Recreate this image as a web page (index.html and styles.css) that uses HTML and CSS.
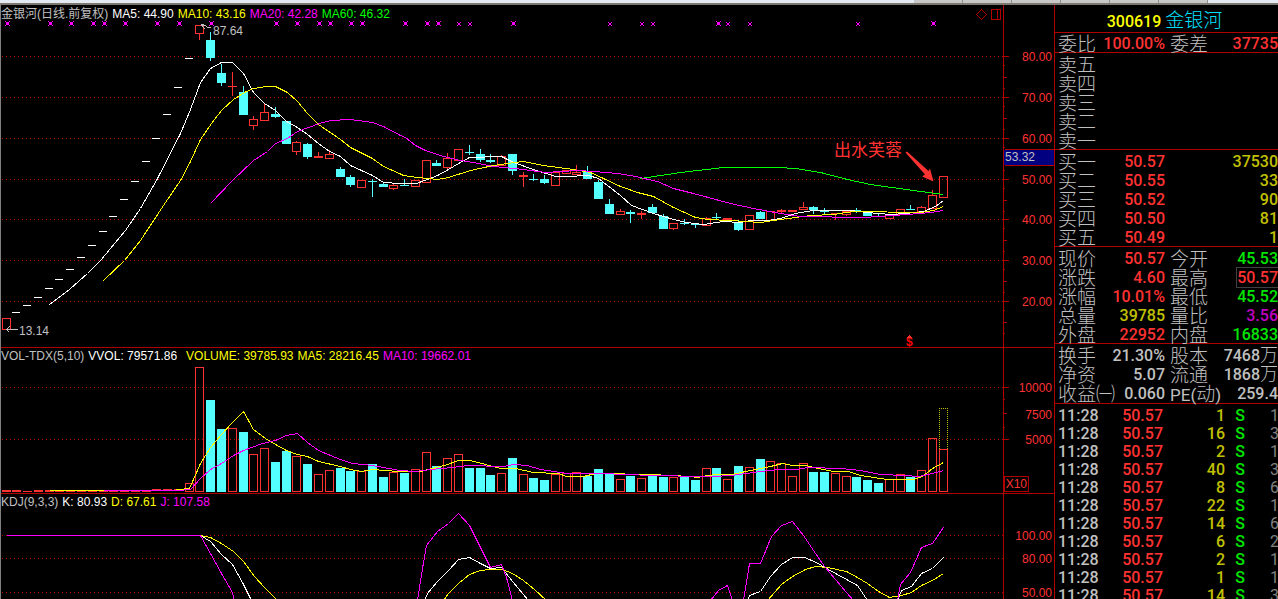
FILE: index.html
```html
<!DOCTYPE html>
<html lang="zh-CN">
<head>
<meta charset="utf-8">
<title>金银河 300619</title>
<link rel="stylesheet" href="styles.css">
</head>
<body>
<div class="strip"><span class="strip-main"></span><span class="strip-tab"></span><span class="strip-tab"></span><span class="strip-tab"></span><span class="strip-tab"></span><span class="strip-tab"></span><span class="strip-tab"></span><span class="strip-end"></span></div>
<div class="terminal">
  <main class="charts">
    <section class="panel panel-price">
      <div class="plot">
        <header class="legend">
          <span class="c-gray">金银河(日线.前复权)</span><span class="c-white">MA5: 44.90</span><span class="c-yellow">MA10: 43.16</span><span class="c-magenta">MA20: 42.28</span><span class="c-green">MA60: 46.32</span>
          <svg class="tools" width="26" height="13" aria-hidden="true"><path d="M5.500 1.500l5 5-5 5-5-5zM15.500 1.500h9v10h-9zM21.500 1.500v10"/></svg>
        </header>
        <svg class="canvas" id="price" height="326"></svg>
      </div>
      <svg class="axis" id="price-axis" height="342"></svg>
    </section>
    <section class="panel panel-volume">
      <div class="plot">
        <header class="legend">
          <span class="c-gray">VOL-TDX(5,10)</span><span class="c-white">VVOL: 79571.86</span><span class="c-yellow gap">VOLUME: 39785.93</span><span class="c-yellow">MA5: 28216.45</span><span class="c-magenta">MA10: 19662.01</span>
        </header>
        <svg class="canvas" id="volume" height="129"></svg>
      </div>
      <svg class="axis" id="volume-axis" height="145"></svg>
    </section>
    <section class="panel panel-kdj">
      <div class="plot">
        <header class="legend">
          <span class="c-gray">KDJ(9,3,3)</span><span class="c-white">K: 80.93</span><span class="c-yellow">D: 67.61</span><span class="c-magenta">J: 107.58</span>
        </header>
        <svg class="canvas" id="kdj"></svg>
      </div>
      <svg class="axis" id="kdj-axis"></svg>
    </section>
  </main>
  <aside class="quote">
    <h1 class="stock"><span class="c-yellow">300619</span> <span class="stock-name">金银河</span></h1>
    <table class="grid head">
      <tr><th>委比</th><td class="c-red">100.00%</td><th>委差</th><td class="c-red">37735</td></tr>
    </table>
    <table class="grid sell">
      <tr><th>卖五</th><td></td><th></th><td></td></tr>
      <tr><th>卖四</th><td></td><th></th><td></td></tr>
      <tr><th>卖三</th><td></td><th></th><td></td></tr>
      <tr><th>卖二</th><td></td><th></th><td></td></tr>
      <tr><th>卖一</th><td></td><th></th><td></td></tr>
    </table>
    <table class="grid">
      <tr><th>买一</th><td class="c-red">50.57</td><th></th><td class="c-olive">37530</td></tr>
      <tr><th>买二</th><td class="c-red">50.55</td><th></th><td class="c-olive">33</td></tr>
      <tr><th>买三</th><td class="c-red">50.52</td><th></th><td class="c-olive">90</td></tr>
      <tr><th>买四</th><td class="c-red">50.50</td><th></th><td class="c-olive">81</td></tr>
      <tr><th>买五</th><td class="c-red">50.49</td><th></th><td class="c-olive">1</td></tr>
    </table>
    <table class="grid">
      <tr><th>现价</th><td class="c-red">50.57</td><th>今开</th><td class="c-lime">45.53</td></tr>
      <tr><th>涨跌</th><td class="c-red">4.60</td><th>最高</th><td class="c-red"><span class="boxed">50.57</span></td></tr>
      <tr><th>涨幅</th><td class="c-red">10.01%</td><th>最低</th><td class="c-lime">45.52</td></tr>
      <tr><th>总量</th><td class="c-olive">39785</td><th>量比</th><td class="c-purple">3.56</td></tr>
      <tr><th>外盘</th><td class="c-red">22952</td><th>内盘</th><td class="c-lime">16833</td></tr>
    </table>
    <table class="grid info">
      <tr><th>换手</th><td>21.30%</td><th>股本</th><td>7468<span class="unit">万</span></td></tr>
      <tr><th>净资</th><td>5.07</td><th>流通</th><td>1868<span class="unit">万</span></td></tr>
      <tr><th>收益㈠</th><td>0.060</td><th><span class="num">PE(</span>动<span class="num">)</span></th><td>259.4</td></tr>
    </table>
    <table class="ticks" id="ticks"></table>
  </aside>
</div>
<script src="chart.js"></script>
</body>
</html>
```

FILE: styles.css
```css
* { box-sizing: border-box; }
body {
  margin: 0;
  height: 100vh;
  overflow: hidden;
  display: flex;
  flex-direction: column;
  background: #000;
  color: #c0c0c0;
  font-family: "Liberation Sans", "Noto Sans CJK SC", sans-serif;
  font-size: 12px;
}

/* window edge above the terminal */
.strip {
  display: flex;
  flex: none;
  height: 5px;
  background: #e4eaf2;
  border-bottom: 2px solid #7c7870;
}
.strip-main { flex: 1; }
.strip-tab { width: 49px; background: #c8c8c8; border-right: 1px solid #909090; }
.strip-end { width: 70px; }

.terminal { display: flex; flex: 1; min-height: 0; border-left: 1px solid #808080; }
.charts { flex: 1; min-width: 0; display: flex; flex-direction: column; }
.panel { display: flex; border-bottom: 1px solid #b00000; }
.panel-kdj { flex: 1; min-height: 0; border-bottom: 0; }
.plot { flex: 1; min-width: 0; display: flex; flex-direction: column; }
.legend { display: flex; gap: 4px; height: 16px; line-height: 17px; white-space: nowrap; }
.panel-price .legend { line-height: 18px; }
.legend .gap { margin-left: 5px; }
.tools { margin: 3px 1px 0 auto; fill: none; stroke: #b00000; shape-rendering: crispEdges; }
.canvas { display: block; width: 100%; flex: none; overflow: visible; }
.panel-kdj .canvas { flex: 1; overflow: hidden; }
.axis { display: block; width: 51px; flex: none; border-left: 1px solid #b00000; }
.panel-kdj .axis { align-self: stretch; height: auto; }

.gridline { stroke: #b00000; stroke-dasharray: 1 3; }
.scale { stroke: #b00000; fill: none; }
.tick { fill: #b00000; }
.scale-text { fill: #ff3232; text-anchor: end; }
.cursor-box { fill: #000080; }
.cursor-text, .mark-text { fill: #c0c0c0; }
.up { stroke: #ff3232; fill: none; }
.up-solid { fill: #ff3232; }
.down { fill: #54ffff; }
.flat { fill: #fff; }
.expect { stroke: #c0c000; fill: none; stroke-dasharray: 1 1; }
.crisp { shape-rendering: crispEdges; }
.line { fill: none; stroke-width: 1; }
.s-white { stroke: #fff; }
.s-yellow { stroke: #ff0; }
.s-magenta { stroke: #f0f; }
.s-green { stroke: #0f0; }
.s-gray { stroke: #c0c0c0; fill: none; }
.scale.line { stroke: #b00000; }
.star { fill: #f0f; }
.note { fill: #ff3232; font-size: 17px; }
.dollar { fill: #f00; font-size: 12px; font-weight: bold; }

.c-gray { color: #c0c0c0; }
.c-white { color: #fff; }
.c-yellow { color: #ff0; }
.c-magenta { color: #f0f; }
.c-green { color: #0f0; }
.c-red { color: #ff3232; }
.c-olive { color: #c0c000; }
.c-lime { color: #00e600; }
.c-purple { color: #c000c0; }

.quote {
  width: 224px;
  flex: none;
  overflow: hidden;
  border-left: 1px solid #b00000;
  font-family: Roboto, "Noto Sans CJK SC", sans-serif;
  font-size: 16px;
  font-weight: 500;
}
.stock {
  margin: 0;
  height: 28px;
  line-height: 34px;
  padding-right: 4px;
  text-align: center;
  font-size: 16px;
  font-weight: 500;
  border-bottom: 1px solid #b00000;
}
.stock-name { color: #00e0ff; font-family: "Noto Sans CJK SC", sans-serif; font-size: 19px; font-weight: 300; line-height: 20px; }
.grid {
  width: 100%;
  table-layout: fixed;
  border-collapse: separate;
  border-spacing: 0;
  border-bottom: 1px solid #b00000;
  padding: 1px 0 0 3px;
}
.grid tr { height: 19px; }
.grid.head { padding-top: 0; }
.grid.info { padding-top: 1px; padding-bottom: 1px; }
.grid th, .grid td { height: 19px; white-space: nowrap; vertical-align: middle; }
.grid th {
  width: 40px;
  padding: 0;
  text-align: left;
  font-family: "Noto Sans CJK SC", sans-serif;
  font-size: 19px;
  font-weight: 300;
  line-height: 19px;
}
.grid td { padding: 3px 0 0; line-height: 16px; text-align: right; }
.grid td:nth-child(2) { width: 67px; }
.grid th:nth-child(3) { width: 45px; padding-left: 5px; }
.num { font-family: Roboto, sans-serif; font-size: 17px; font-weight: 400; line-height: 0; }
.unit { font-family: "Noto Sans CJK SC", sans-serif; font-size: 18px; font-weight: 300; line-height: 0; }
.boxed { outline: 1px solid #404040; }
.ticks { width: 100%; table-layout: fixed; border-spacing: 0; padding: 3px 0 0 3px; }
.ticks td { height: 18px; line-height: 18px; padding: 0; text-align: right; white-space: nowrap; }
.ticks .time { width: 40px; text-align: left; }
.ticks .deal { width: 65px; }
.ticks .lots { width: 62px; }
.ticks .side { width: 22px; padding-right: 2px; }
.ticks .count { text-align: left; padding-left: 23px; color: #808080; font-weight: 400; }
```

FILE: chart.js
```javascript
const NS = "http://www.w3.org/2000/svg";

function add(parent, tag, cls, attrs, text) {
  const el = document.createElementNS(NS, tag);
  if (cls) el.setAttribute("class", cls);
  for (const k in attrs) el.setAttribute(k, attrs[k]);
  if (text !== undefined) el.textContent = text;
  parent.appendChild(el);
  return el;
}
function layer(id, x, y) {
  return add(document.getElementById(id), "g", "", { transform: `translate(${-x} ${-y})` });
}
function rect(g, cls, x, y, w, h) {
  add(g, "rect", cls + " crisp", { x, y, width: w, height: h });
}
function frame(g, cls, x, y, w, h) {
  add(g, "rect", cls + " crisp", { x: x + 0.5, y: y + 0.5, width: w - 1, height: h - 1 });
}
function line(g, cls, points) {
  add(g, "polyline", "line crisp " + cls, { points, transform: "translate(0.5 0.5)" });
}
function gridlines(g, ys) {
  ys.forEach(y => add(g, "line", "gridline crisp", { x1: 2, x2: 1003, y1: y + 0.5, y2: y + 0.5 }));
}
const barX = i => Math.floor(6.135 + 10.77 * i);

/* u/d = up/down, f = filled up bar, w = one-price day: [kind, high, top, bottom, low] */
const bars = [["u",318,318,330,330]];
[312,305,297,288,279,269,257,245,231,216,199,181,161,138,114,87,58].forEach(y => bars.push(["w",y,y,y+1,y+1]));
bars.push(
 ["u",25,25,34,40],["d",32,40,58,61],["d",64,73,83,86],["f",72,86,87,96],["d",86,92,115,115],
 ["u",116,119,126,130],["u",104,112,121,121],["d",107,114,117,118],["d",121,121,144,144],["u",141,142,152,155],
 ["d",143,144,157,159],["f",152,156,158,158],["u",150,154,159,159],["d",167,169,177,177],["d",175,177,185,187],
 ["u",180,180,188,188],["d",179,181,182,197],["d",182,184,187,187],["u",184,185,189,190],["d",179,185,186,186],
 ["u",180,180,187,187],["u",160,160,183,183],["d",160,163,166,166],["u",153,158,168,169],["u",149,149,161,161],
 ["d",145,152,153,155],["d",149,154,160,162],["d",154,160,162,163],["u",155,156,166,166],["d",154,154,171,175],
 ["f",172,175,177,187],["d",174,179,180,181],["d",175,179,183,184],["u",172,172,186,186],["u",170,170,174,174],
 ["u",165,172,175,175],["d",166,172,179,179],["d",180,182,199,199],["d",199,204,214,214],["u",209,211,215,215],
 ["d",210,212,214,223],["f",211,213,215,219],["d",204,207,213,213],["d",214,216,229,229],["u",223,223,229,230],
 ["d",219,223,224,225],["d",224,224,225,228],["u",217,218,226,226],["d",213,217,218,219],["f",218,218,220,220],
 ["d",220,222,230,231],["u",215,215,230,230],["d",211,212,219,219],["u",211,211,221,221],["f",209,210,212,214],
 ["f",210,210,212,212],["u",202,207,210,210],["d",206,207,210,214],["d",208,211,212,214],["f",213,213,214,220],
 ["u",211,211,215,216],["d",208,210,212,213],["d",213,213,216,216],["d",213,213,214,216],["u",214,214,219,219],
 ["u",209,209,215,215],["d",205,209,210,210],["u",206,207,212,212],["u",190,195,209,209],["u",176,176,198,198]);

const volumeTop = [490,490,491,490,490,491,490,490,490,490,490,490,490,490,489,489,489,483,
 367,400,429,428,432,454,448,462,451,456,464,474,470,468,471,471,464,477,472,473,469,452,466,458,454,468,468,475,
 473,458,474,478,480,474,473,472,476,469,473,479,476,478,474,477,477,477,480,468,468,479,466,467,459,461,463,476,
 463,472,472,473,476,477,480,483,479,474,477,470,438,449];

/* price panel */
const price = layer("price", 1, 21);
gridlines(price, [56,97,138,179,219,260,301]);
[7,50,71,93,104,125,157,179,211,276,297,319,330,351,362,405,427,438,513,718,933].forEach(x => {
  rect(price, "star", x - 1, 22, 3, 3);
  [[-2,21],[2,21],[-2,25],[2,25]].forEach(([dx, y]) => rect(price, "star", x + dx, y, 1, 1));
});
[459,470,610,642,653,728,750,858].forEach(x => {
  rect(price, "star", x - 1, 23, 2, 2);
  [[-2,22],[1,22],[-2,25],[1,25]].forEach(([dx, y]) => rect(price, "star", x + dx, y, 1, 1));
});
bars.forEach(([k, hi, top, bot, lo], i) => {
  const x = barX(i);
  if (k === "w") return rect(price, "flat", x - 4, top, 8, 1);
  const ink = k === "d" ? "down" : "up-solid";
  if (hi < top) rect(price, ink, x, hi, 1, top - hi);
  if (lo > bot) rect(price, ink, x, bot, 1, lo - bot);
  if (k === "u") frame(price, "up", x - 4, top, 9, bot - top);
  else rect(price, ink, x - 4, top, 9, bot - top);
});
line(price, "s-green", "640,178 667,174 680,172 723,167 777,167 795,168 820,172 847,179 870,184 913,190 943,194");
line(price, "s-white", "49,304 69,289 87,273 100,260 125,230 140,208 156,180 180,133 190,109 200,82 210,68 221,62 232,62 243,73 253,92 264,103 275,110 286,121 297,127 307,134 318,143 329,151 340,156 350,165 361,170 372,175 383,182 399,183 416,183 427,179 437,175 448,169 458,163 469,157 501,156 513,162 533,169 555,176 566,176 588,175 598,178 620,195 631,205 653,213 673,219 686,222 703,224 723,221 740,222 750,220 767,220 780,218 795,213 813,210 850,210 867,212 890,214 905,213 923,211 935,206 943,200");
line(price, "s-yellow", "103,280 124,260 140,240 163,205 180,180 190,161 200,139 211,123 221,110 233,99 244,92 253,88 266,86 275,86 287,92 297,101 307,113 318,124 340,139 350,147 372,158 383,166 399,173 403,175 417,177 437,179 448,177 470,170 493,165 507,163 523,161 543,165 573,169 590,172 603,178 620,186 637,192 653,196 673,207 695,217 707,219 730,220 760,222 780,219 810,215 833,214 853,211 920,212 933,210 943,206");
line(price, "s-magenta", "210,203 232,180 253,160 267,151 275,143 287,138 297,131 319,123 330,120 350,119 372,122 383,126 400,135 405,137 415,145 425,150 443,156 460,160 473,162 493,166 523,169 545,172 577,170 593,171 617,173 635,176 657,181 673,188 693,193 730,203 753,208 780,213 800,216 863,217 907,214 930,212 943,210");
add(price, "path", "s-gray crisp", { d: "M201.500 25.500h4l2 2h3M201.500 25.500v-1h2M201.500 25.500l4 4" });
add(price, "text", "mark-text", { x: 213, y: 35 }, "87.64");
add(price, "path", "s-gray crisp", { d: "M6.500 329.500h11M6.500 329.500l3-3M6.500 329.500l3 3" });
add(price, "text", "mark-text", { x: 19, y: 335 }, "13.14");
add(price, "text", "note", { x: 834, y: 156 }, "出水芙蓉");
add(price, "path", "up-solid", { d: "M905.500 152.500L907 151.500 928.500 171 930 168.500 933.500 181.500 922 176.500 925 174.500Z" });
add(price, "text", "dollar", { x: 906, y: 346 }, "$");
add(price, "path", "up-solid crisp", { d: "M909.500 335l3 3h-6z" });

const pAxis = layer("price-axis", 1004, 5);
function tick(g, y, len) { rect(g, "tick", 1004, y, len, 1); }
[56,97,138,179,219,260,301].forEach((y, n) => {
  tick(pAxis, y, 5); tick(pAxis, y + 9, 1); tick(pAxis, y + 21, 3); tick(pAxis, y + 32, 1);
  add(pAxis, "text", "scale-text", { x: 1052, y: y + 5 }, (80 - n * 10) + ".00");
});
rect(pAxis, "cursor-box", 1004, 150, 50, 15);
line(pAxis, "scale", "1004,149 1054,149");
line(pAxis, "scale", "1004,165 1054,165");
add(pAxis, "text", "cursor-text", { x: 1005, y: 161 }, "53.32");

/* volume panel */
const vol = layer("volume", 1, 364);
gridlines(vol, [387, 439]);
volumeTop.forEach((y, i) => {
  const x = barX(i) - 4;
  if (bars[i][0] === "d") rect(vol, "down", x, y, 9, 492 - y);
  else if (y > 488) rect(vol, "up-solid", x, y, 9, y === 491 ? 1 : 2);
  else frame(vol, "up", x, y, 9, 492 - y);
});
add(vol, "path", "expect crisp", { d: "M939.500 449V408.500H947.500V449" });
line(vol, "s-yellow", "49,490 173,490 178,489 189,488 200,463 210,447 221,434 232,422 243,411 253,429 265,438 275,444 286,450 297,454 307,456 318,461 340,466 350,469 361,471 373,469 383,470 399,471 420,471 436,467 447,464 458,460 470,460 485,464 500,468 515,468 533,472 558,473 566,476 583,476 595,473 613,473 635,474 650,474 690,476 697,477 707,475 717,474 731,474 760,468 770,466 782,463 792,465 805,465 818,468 833,471 848,471 860,475 887,479 913,479 922,476 932,468 943,462");
line(vol, "s-magenta", "103,490 178,490 190,489 200,478 210,469 221,463 233,455 243,450 262,443 275,440 286,435 297,433 307,442 318,450 340,459 352,463 372,465 383,467 399,470 415,471 430,469 452,467 467,465 503,466 513,464 527,465 540,469 567,473 607,473 620,474 657,475 697,476 712,476 731,475 760,471 778,469 795,469 808,467 840,468 860,470 880,474 905,475 918,476 932,473 943,470");

const vAxis = layer("volume-axis", 1004, 348);
[[387,5],[399,1],[413,3],[427,1],[439,5]].forEach(([y, len]) => tick(vAxis, y, len));
[[392,"10000"],[419,"7500"],[444,"5000"]].forEach(([y, t]) => add(vAxis, "text", "scale-text", { x: 1052, y }, t));
frame(vAxis, "scale", 1004, 476, 25, 16);
add(vAxis, "text", "scale-text", { x: 1027, y: 488 }, "X10");

/* KDJ panel */
const kdj = layer("kdj", 1, 510);
gridlines(kdj, [535, 558, 592]);
line(kdj, "s-white", "200,535 210,541 221,554 232,564 243,584 251,600");
line(kdj, "s-white", "424,600 427,593 437,581 448,570 458,559 469,557 480,563 490,568 501,567 512,581 528,600");
line(kdj, "s-white", "747,600 749,595 760,591 770,576 781,564 792,557 804,557 816,562 826,568 857,585 867,600");
line(kdj, "s-white", "897,600 901,590 911,586 921,573 932,568 943,557");
line(kdj, "s-yellow", "200,535 210,537 221,543 233,551 243,561 254,576 264,587 277,600");
line(kdj, "s-yellow", "443,600 448,593 458,583 469,574 480,570 490,569 502,569 512,573 523,580 534,589 546,600");
line(kdj, "s-yellow", "767,600 781,584 792,576 805,569 815,566 827,567 846,571 857,577 867,583 878,591 889,597 901,595 911,592 921,585 932,580 943,573");
line(kdj, "s-magenta", "6,535 200,535 210,553 221,573 232,592 234,600");
line(kdj, "s-magenta", "417,600 422,568 426,545 437,531 448,523 458,513 469,525 480,547 490,567 501,564 506,577 512,600");
line(kdj, "s-magenta", "710,600 718,590 727,585 732,600");
line(kdj, "s-magenta", "743,600 749,563 760,563 771,536 781,525 792,521 803,535 813,550 824,566 835,579 846,592 853,600");
line(kdj, "s-magenta", "897,600 900,584 910,572 921,547 932,543 943,527");
const kAxis = layer("kdj-axis", 1004, 494);
[[540,"100.00"],[563,"80.00"],[597,"50.00"]].forEach(([y, t]) => add(kAxis, "text", "scale-text", { x: 1052, y }, t));

/* tick-by-tick deals */
const deals = [[1,1],[16,3],[2,1],[40,3],[8,6],[22,1],[14,6],[6,2],[2,1],[1,1],[14,3]];
document.getElementById("ticks").innerHTML = deals.map(([lots, n]) =>
  `<tr><td class="time">11:28</td><td class="deal c-red">50.57</td><td class="lots c-olive">${lots}</td><td class="side c-lime">S</td><td class="count">${n}</td></tr>`).join("");
```
